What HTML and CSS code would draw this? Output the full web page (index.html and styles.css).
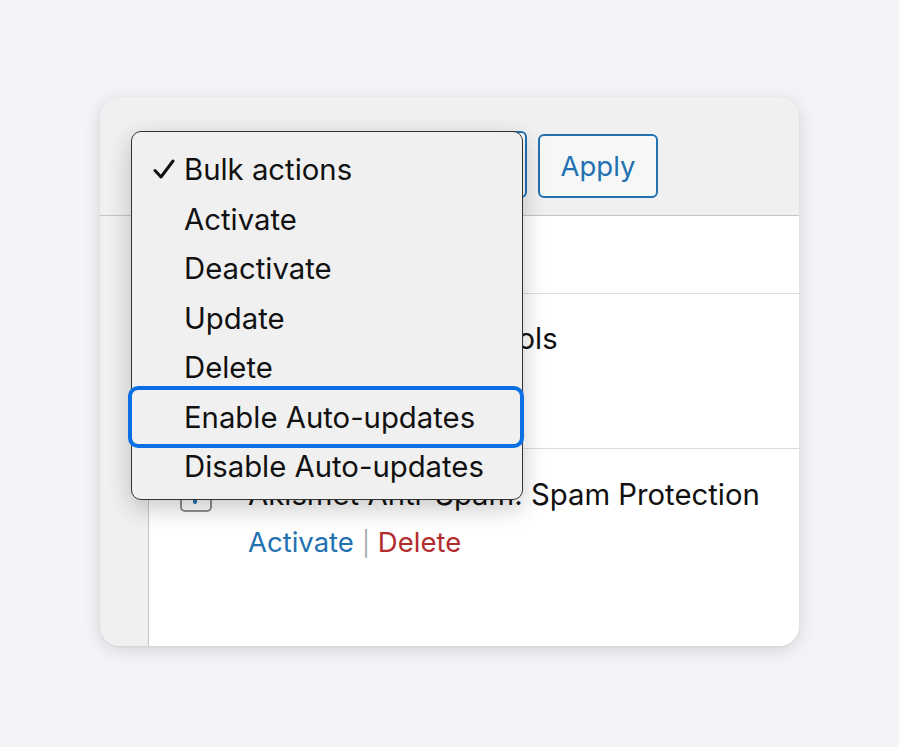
FILE: index.html
```html
<!DOCTYPE html>
<html lang="en">
<head>
<meta charset="utf-8">
<title>Bulk actions</title>
<link rel="stylesheet" href="styles.css">
</head>
<body>
<div class="card">
  <div class="toolbar">
    <div class="select" aria-label="Bulk actions"></div>
    <button class="apply">Apply</button>
  </div>
  <div class="body">
    <div class="strip"></div>
    <div class="table">
      <div class="row head">
        <span class="cb"></span>
      </div>
      <div class="row r1">
        <span class="cb"></span>
        <div class="cell">
          <div class="title tight">Plugin Developer Tools</div>
        </div>
      </div>
      <div class="row r2">
        <span class="cb checked"></span>
        <div class="cell">
          <div class="title">Akismet Anti-Spam: Spam Protection</div>
          <div class="links"><a class="act">Activate</a><span class="sep">|</span><a class="del">Delete</a></div>
        </div>
      </div>
    </div>
  </div>
  <ul class="menu">
    <li class="item selected"><svg class="check" width="22" height="22" viewBox="0 0 22 22"><path d="M2 12.5 L8 19 L20 3" fill="none" stroke="#111" stroke-width="3" stroke-linecap="round" stroke-linejoin="round"/></svg>Bulk actions</li>
    <li class="item">Activate</li>
    <li class="item">Deactivate</li>
    <li class="item">Update</li>
    <li class="item">Delete</li>
    <li class="item focus">Enable Auto-updates</li>
    <li class="item">Disable Auto-updates</li>
  </ul>
</div>
</body>
</html>
```

FILE: styles.css
```css
* { box-sizing: border-box; }
html, body { margin: 0; padding: 0; }
body {
  background: #f3f4f7;
  font-family: Inter, "Liberation Sans", sans-serif;
  width: 899px;
  height: 747px;
  overflow: hidden;
  padding: 97px 0 0 100px;
}
.card {
  position: relative;
  width: 699px;
  height: 549px;
  border-radius: 20px;
  background: #f0f0f1;
  box-shadow: 0 4px 18px rgba(0,0,0,0.13), 0 1px 3px rgba(0,0,0,0.06);
  overflow: hidden;
  display: flex;
  flex-direction: column;
}
.toolbar {
  height: 119px;
  flex: none;
  display: flex;
  align-items: flex-end;
  gap: 11px;
  padding: 34px 0 17px 48px;
  border-bottom: 1px solid #c3c4c7;
}
.select {
  width: 379px;
  height: 67px;
  border: 2px solid #2271b1;
  border-radius: 6px;
  background: #fff;
}
.apply {
  width: 120px;
  height: 64px;
  border: 2px solid #2271b1;
  border-radius: 6px;
  background: #f6f7f7;
  color: #2271b1;
  font-family: inherit;
  font-size: 27.5px;
  padding: 0;
}
.body {
  flex: 1;
  display: flex;
}
.strip {
  width: 48px;
  flex: none;
  background: #f0f0f1;
}
.table {
  flex: 1;
  background: #fff;
  border-left: 1px solid #c3c4c7;
  display: flex;
  flex-direction: column;
}
.row {
  display: flex;
  align-items: flex-start;
  gap: 36px;
  padding-left: 31px;
  border-bottom: 1px solid #dcdcde;
  font-size: 29.3px;
  color: #111;
}
.row.head { height: 78px; align-items: center; }
.row.r1 { height: 155px; padding-top: 26px; }
.row.r2 { flex: 1; border-bottom: 0; padding-top: 27px; }
.cb {
  width: 32px;
  height: 32px;
  flex: none;
  border: 2px solid #8c8f94;
  border-radius: 5px;
  background: #fff;
  margin-top: 4px;
  position: relative;
}
.cb.checked::after {
  content: "";
  position: absolute;
  left: 11px;
  top: 14px;
  width: 4px;
  height: 8px;
  background: #2271b1;
  border-radius: 2px;
}
.title { line-height: 38px; }
.title.tight { word-spacing: -4px; }
.links { margin-top: 10px; line-height: 36px; font-size: 27.5px; }
.act { color: #2271b1; }
.del { color: #b32d2e; }
.sep { color: #a7aaad; margin: 0 8px; font-size: 24px; }

.menu {
  position: absolute;
  left: 31px;
  top: 34px;
  width: 392px;
  height: 369px;
  margin: 0;
  padding: 13px 0 9px 0;
  list-style: none;
  background: #f0f0f0;
  border: 1.5px solid #333;
  border-radius: 10px;
  box-shadow: 0 8px 24px rgba(0,0,0,0.22);
}
.item {
  position: relative;
  height: 49.5px;
  line-height: 49.5px;
  padding-left: 52px;
  font-size: 29.3px;
  color: #111;
}
.check {
  position: absolute;
  left: 21px;
  top: 13px;
}
.item.focus::after {
  content: "";
  position: absolute;
  left: -4px;
  right: -2px;
  top: -7px;
  bottom: -6px;
  border: 4px solid #0a6fe2;
  border-radius: 10px;
}
```
